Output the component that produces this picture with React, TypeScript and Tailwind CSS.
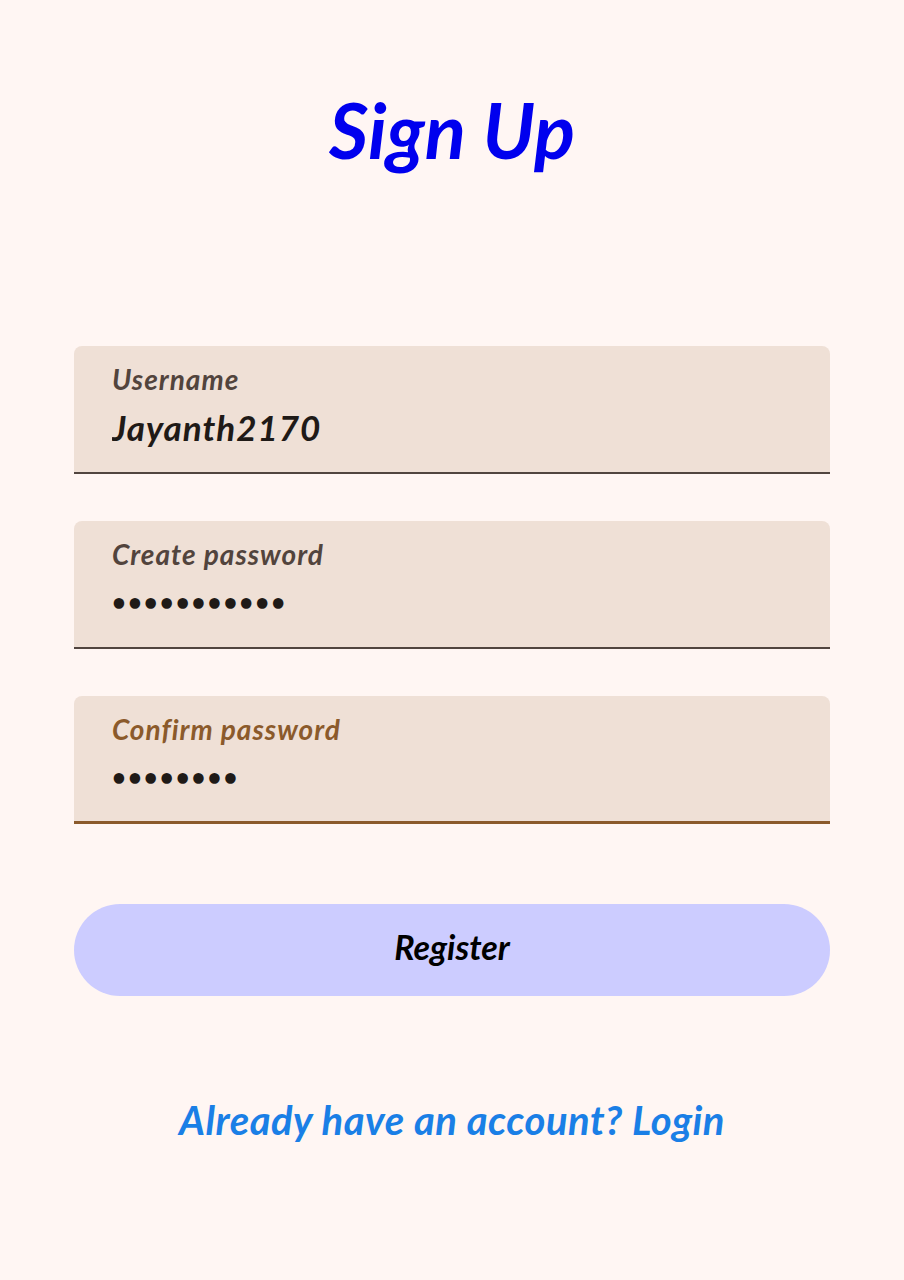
import React, { useState } from "react";

const font = { fontFamily: "Lato, 'Open Sans', sans-serif" };

type FieldProps = {
  label: string;
  value: string;
  type?: string;
  active?: boolean;
  onChange: (v: string) => void;
};

const Field: React.FC<FieldProps> = ({ label, value, type = "text", active, onChange }) => (
  <label
    className={
      "flex flex-col h-[128px] rounded-t-[8px] bg-[#efe0d6] px-[38px] pt-[17px] " +
      (active ? "border-b-[3px] border-[#8b5a2b]" : "border-b-2 border-[#51453f]")
    }
  >
    <span
      className={
        "text-[28px] font-bold italic leading-[32px] tracking-[1px] " +
        (active ? "text-[#8b5a2b]" : "text-[#52443d]")
      }
    >
      {label}
    </span>
    <input
      type={type}
      value={value}
      onChange={(e) => onChange(e.target.value)}
      className={
        "mt-[10px] h-[44px] bg-transparent font-bold italic leading-[44px] text-[#1f1a17] outline-none " +
        (type === "password" ? "text-[24px] tracking-[2px]" : "text-[35px] tracking-[1px]")
      }
      style={font}
    />
  </label>
);

const App: React.FC = () => {
  const [username, setUsername] = useState("Jayanth2170");
  const [password, setPassword] = useState("abcdefghijk");
  const [confirm, setConfirm] = useState("abcdefgh");

  return (
    <div className="min-h-[1280px] w-full bg-[#fff6f3]" style={font}>
      <div className="flex flex-col px-[74px]">
        {/* Title */}
        <h1 className="mt-[86px] text-center text-[76px] font-bold italic leading-[88px] text-[#0000ee]">
          Sign Up
        </h1>

        {/* Fields */}
        <div className="mt-[172px] flex flex-col gap-[47px]">
          <Field label="Username" value={username} onChange={setUsername} />
          <Field label="Create password" value={password} type="password" onChange={setPassword} />
          <Field label="Confirm password" value={confirm} type="password" active onChange={setConfirm} />
        </div>

        {/* Register */}
        <button className="mt-[80px] h-[92px] rounded-full bg-[#ccccff] pb-[8px] text-[34px] font-bold italic text-black">
          Register
        </button>

        {/* Login link */}
        <a href="#" className="mt-[94px] text-center text-[40px] font-bold italic text-[#1a7fe6] tracking-[0.5px]">
          Already have an account? Login
        </a>
      </div>
    </div>
  );
};

export default App;
